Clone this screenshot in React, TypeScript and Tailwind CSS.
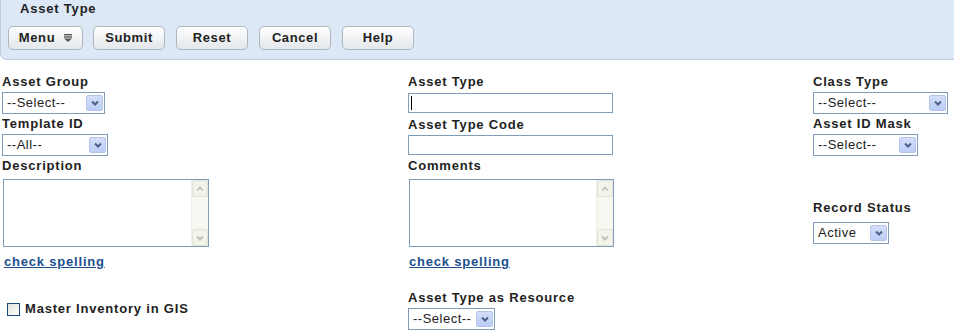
import React from 'react'

const font = { fontFamily: '"Liberation Sans", Arial, sans-serif' }

function Chevron({ color = '#4d6185' }: { color?: string }) {
  return (
    <svg width="8" height="6" viewBox="0 0 8 6">
      <path d="M1 1.5 L4 4.5 L7 1.5" fill="none" stroke={color} strokeWidth="2" />
    </svg>
  )
}

function ToolButton({ label, width, menu, className = '' }: { label: string; width: string; menu?: boolean; className?: string }) {
  return (
    <button
      className={`${width} h-[24px] flex items-center justify-center gap-[9px] rounded-[5px] border border-[#aeb6bf] bg-gradient-to-b from-[#ffffff] to-[#e3e7eb] text-[13px] font-bold tracking-[0.6px] text-[#222] ${className}`}
    >
      <span>{label}</span>
      {menu && (
        <svg width="8" height="8" viewBox="0 0 8 8">
          <rect x="0" y="0" width="8" height="1.4" fill="#555" />
          <rect x="0" y="2.3" width="8" height="1.4" fill="#555" />
          <path d="M0 4.6 H8 L4 8 Z" fill="#555" />
        </svg>
      )}
    </button>
  )
}

function Label({ children, className = '' }: { children: React.ReactNode; className?: string }) {
  return (
    <div className={`text-[13px] leading-[18px] font-bold tracking-[0.8px] text-[#222] ${className}`}>{children}</div>
  )
}

function Select({ value, width, className = '' }: { value: string; width: string; className?: string }) {
  return (
    <div
      className={`${width} h-[22px] flex items-center justify-between border border-[#7f9db9] bg-white pl-[4px] pr-[1px] ${className}`}
    >
      <span className="text-[13px] tracking-[0.5px] text-[#222]">{value}</span>
      <span className="w-[17px] h-[16px] flex items-center justify-center rounded-[2px] border border-[#b4c4ee] bg-gradient-to-b from-[#d4defa] to-[#bccdf6]">
        <Chevron />
      </span>
    </div>
  )
}

function TextArea({ width, className = '' }: { width: string; className?: string }) {
  return (
    <div className={`${width} h-[68px] flex justify-end border border-[#7f9db9] bg-white ${className}`}>
      <div className="w-[17px] h-full flex flex-col justify-between bg-[#f8f8f2] border-l border-[#f0f0e6]">
        <span className="h-[17px] flex items-center justify-center rounded-[2px] border border-[#e2e2d8] bg-[#f3f3ea]">
          <svg width="8" height="6" viewBox="0 0 8 6">
            <path d="M1 4.5 L4 1.5 L7 4.5" fill="none" stroke="#c0c0b8" strokeWidth="1.6" />
          </svg>
        </span>
        <span className="h-[17px] flex items-center justify-center rounded-[2px] border border-[#e2e2d8] bg-[#f3f3ea]">
          <Chevron color="#c0c0b8" />
        </span>
      </div>
    </div>
  )
}

function SpellLink({ className = '' }: { className?: string }) {
  return (
    <div className={`text-[13px] leading-[18px] font-bold tracking-[0.8px] text-[#1b4f8f] underline ${className}`}>
      check spelling
    </div>
  )
}

export default function App() {
  return (
    <div className="w-[954px] h-[335px] bg-white overflow-hidden" style={font}>
      <div className="h-[60px] bg-[#dce8f5] border-l border-b border-[#b9cde5] rounded-bl-[7px] pl-[18px]">
        <div className="text-[13px] leading-[18px] font-bold tracking-[0.8px] text-[#222] pl-[1px]">Asset Type</div>
        <div className="flex mt-[8px] -ml-[11px]">
          <ToolButton label="Menu" width="w-[75px]" menu />
          <ToolButton label="Submit" width="w-[72px]" className="ml-[10px]" />
          <ToolButton label="Reset" width="w-[72px]" className="ml-[11px]" />
          <ToolButton label="Cancel" width="w-[72px]" className="ml-[11px]" />
          <ToolButton label="Help" width="w-[72px]" className="ml-[11px]" />
        </div>
      </div>

      <div className="flex pl-[2px] pt-[13px]">
        <div className="w-[406px] flex flex-col">
          <Label>Asset Group</Label>
          <Select value="--Select--" width="w-[103px]" className="mt-[1px]" />
          <Label className="mt-[1px]">Template ID</Label>
          <Select value="--All--" width="w-[106px]" className="mt-[1px]" />
          <Label className="mt-[1px]">Description</Label>
          <TextArea width="w-[206px]" className="mt-[4px] ml-[1px]" />
          <SpellLink className="mt-[6px] ml-[2px]" />
          <div className="flex items-start mt-[29px]">
            <span className="w-[13px] h-[13px] mt-[3px] ml-[5px] border border-[#1c4a7e] bg-gradient-to-br from-[#e2e2dc] to-[#ffffff]" />
            <span className="ml-[5px] text-[13px] leading-[18px] font-bold tracking-[0.8px] text-[#222]">
              Master Inventory in GIS
            </span>
          </div>
        </div>

        <div className="w-[405px] flex flex-col">
          <Label>Asset Type</Label>
          <div className="w-[205px] h-[20px] mt-[2px] border border-[#7f9db9] bg-white flex items-center pl-[2px]">
            <span className="w-[1px] h-[14px] bg-black" />
          </div>
          <Label className="mt-[3px]">Asset Type Code</Label>
          <div className="w-[205px] h-[20px] mt-[1px] border border-[#7f9db9] bg-white" />
          <Label className="mt-[2px]">Comments</Label>
          <TextArea width="w-[205px]" className="mt-[4px] ml-[1px]" />
          <SpellLink className="mt-[6px] ml-[1px]" />
          <Label className="mt-[18px]">Asset Type as Resource</Label>
          <Select value="--Select--" width="w-[87px]" className="mt-[1px]" />
        </div>

        <div className="flex-1 flex flex-col">
          <Label>Class Type</Label>
          <Select value="--Select--" width="w-[135px]" className="mt-[1px]" />
          <Label className="mt-[1px]">Asset ID Mask</Label>
          <Select value="--Select--" width="w-[105px]" className="mt-[1px]" />
          <Label className="mt-[43px]">Record Status</Label>
          <Select value="Active" width="w-[76px]" className="mt-[5px]" />
        </div>
      </div>
    </div>
  )
}
